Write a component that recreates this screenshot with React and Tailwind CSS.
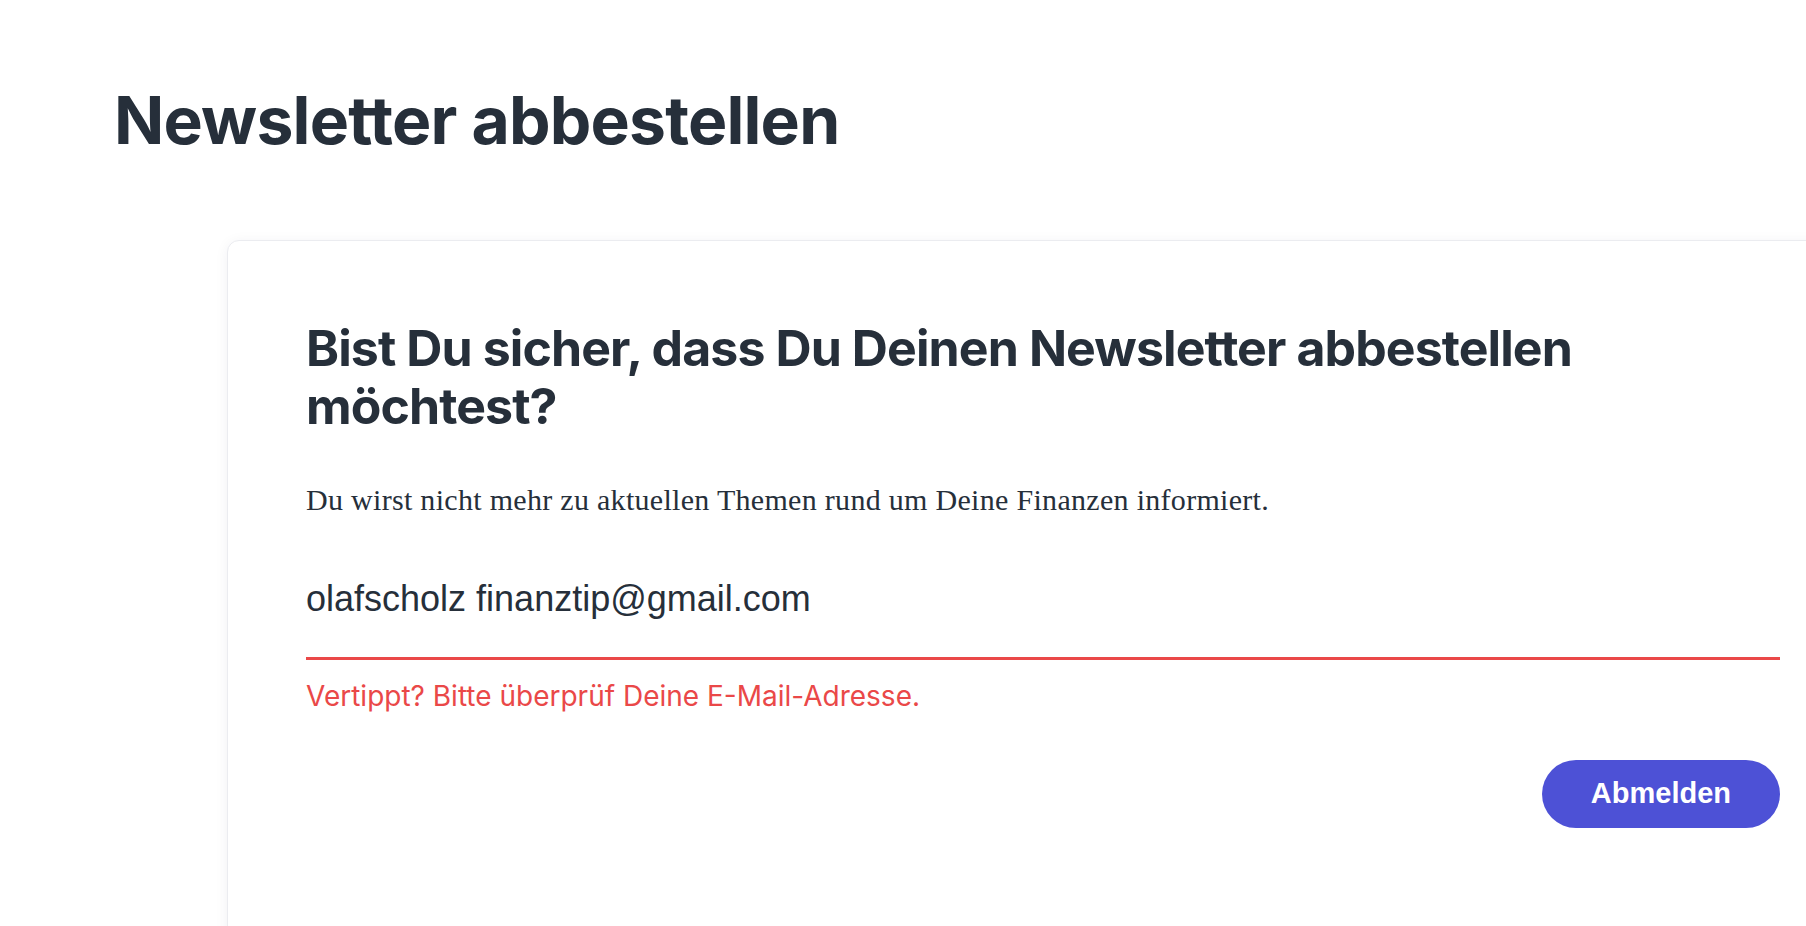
import React from "react"

const App = () => {
  return (
    <div className="h-screen w-full overflow-hidden bg-white text-[#262f3a]">
      <div className="pl-[114px] pt-[81px]">
        {/* PAGE TITLE */}
        <h1 className="font-['Inter',sans-serif] text-[66px] font-bold leading-[79px] tracking-[-0.8px]">
          Newsletter abbestellen
        </h1>

        {/* CARD */}
        <div className="ml-[113px] mt-[80px] w-[1632px] rounded-[12px] border border-[#ebecf0] bg-white px-[78px] pt-[78px] pb-[140px] shadow-[0_2px_14px_rgba(20,20,60,0.06)]">
          <h2 className="font-['Inter',sans-serif] text-[50px] font-bold leading-[58px] tracking-[-0.9px]">
            Bist Du sicher, dass Du Deinen Newsletter abbestellen
            <br />
            möchtest?
          </h2>

          <p className="mt-[47px] font-['Liberation_Serif',serif] text-[30px] leading-[36px] tracking-[0.3px]">
            Du wirst nicht mehr zu aktuellen Themen rund um Deine Finanzen informiert.
          </p>

          <div className="mt-[59px]">
            <input
              type="email"
              readOnly
              value="olafscholz finanztip@gmail.com"
              className="block h-[83px] w-full border-b-[3px] border-[#ea4848] bg-transparent pb-[36px] font-['Liberation_Sans',Arial,sans-serif] text-[36px] leading-[44px] text-[#262f3a] outline-none"
            />
            <p className="mt-[20px] font-['Inter',sans-serif] text-[28px] leading-[32px] text-[#ea4848]">
              Vertippt? Bitte überprüf Deine E-Mail-Adresse.
            </p>
          </div>

          <div className="mt-[48px] flex justify-end">
            <button className="h-[68px] rounded-full bg-[#4d51d6] px-[49px] font-['Liberation_Sans',Arial,sans-serif] text-[29px] font-bold text-white">
              Abmelden
            </button>
          </div>
        </div>
      </div>
    </div>
  )
}

export default App
